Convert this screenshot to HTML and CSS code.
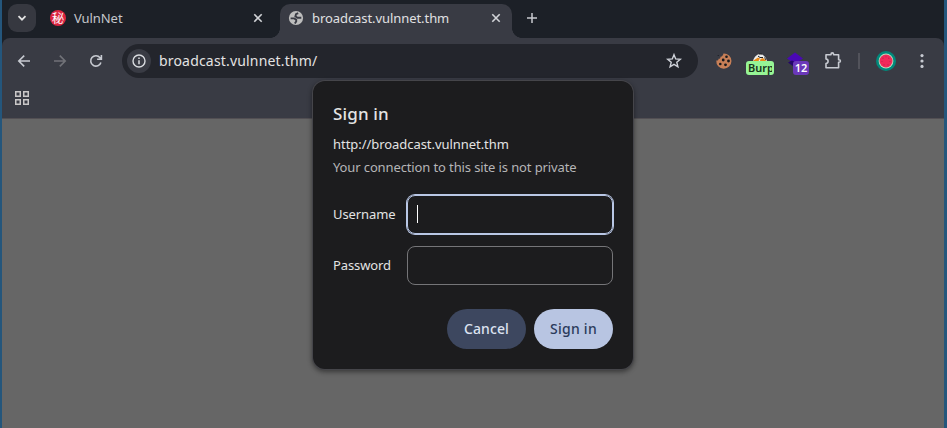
FILE: index.html
```
<!DOCTYPE html>
<html lang="en">
<head>
<meta charset="utf-8">
<title>broadcast.vulnnet.thm</title>
<link rel="stylesheet" href="styles.css">
</head>
<body>
<div class="window">
  <header class="tabs">
    <button class="tab-search" aria-label="Search tabs"><svg width="28" height="28" viewBox="0 0 28 28"><path d="M10.5 12.2l3.5 3.5 3.5-3.5" fill="none" stroke="#e3e3e3" stroke-width="1.8"/></svg></button>
    <div class="tab">
      <span class="seal">秘</span>
      <span class="tab-title">VulnNet</span>
      <svg class="close" width="16" height="16" viewBox="0 0 16 16"><path d="M4.3 4.3l7.4 7.4M11.7 4.3l-7.4 7.4"/></svg>
    </div>
    <div class="tab tab-active">
      <svg class="globe" width="16" height="16" viewBox="0 0 16 16"><circle cx="8" cy="8" r="7.1" fill="#bdbdbd"/><path d="M10.2 3.2L8 4.2 7.4 6.400l2.100 1.400h3.800M2.600 8.400h3.600l2 1.400v1.700l-1.400 2" fill="none" stroke="#393b44" stroke-width="1.9"/></svg>
      <span class="tab-title">broadcast.vulnnet.thm</span>
      <svg class="close" width="16" height="16" viewBox="0 0 16 16"><path d="M4.3 4.3l7.4 7.4M11.7 4.3l-7.4 7.4"/></svg>
    </div>
    <svg class="new-tab" width="16" height="16" viewBox="0 0 16 16"><path d="M8 3v10M3 8h10" stroke="#c7c9cf" stroke-width="1.5"/></svg>
  </header>
  <div class="chrome">
    <nav class="toolbar">
      <svg class="nav" width="16" height="16" viewBox="0 0 16 16"><path d="M14 8H3M8.2 2.6L2.8 8l5.4 5.4" stroke="#c7cad1"/></svg>
      <svg class="nav" width="16" height="16" viewBox="0 0 16 16"><path d="M2 8h11M7.8 2.6L13.2 8l-5.4 5.4" stroke="#717278"/></svg>
      <svg class="nav" width="16" height="16" viewBox="0 0 16 16"><path d="M12.9 9.4A5.2 5.2 0 1 1 12 4.7L13.3 6M13.4 2v4.3H9.1" stroke="#c7cad1"/></svg>
      <div class="address">
        <span class="info"><svg width="16" height="16" viewBox="0 0 16 16"><circle cx="8" cy="8" r="6" fill="none" stroke="#dadce0" stroke-width="1.4"/><path d="M8 7.2v4M8 4.6v1.5" stroke="#dadce0" stroke-width="1.5"/></svg></span>
        <span class="url">broadcast.vulnnet.thm/</span>
        <svg width="18" height="18" viewBox="0 0 18 18"><path d="M9 2.7l1.7 4.2 4.6.4-3.5 3 1.1 4.5L9 12.4l-3.9 2.4 1.1-4.5-3.5-3 4.6-.4z" fill="none" stroke="#d0d3da" stroke-width="1.4"/></svg>
      </div>
      <div class="extensions">
        <svg width="18" height="18" viewBox="0 0 18 18"><path d="M8.500 1.500A7.600 7.600 0 1 1 1.300 8.500c1.600.3 2.400-.4 2.200-1.700 1.500.2 2.200-.6 1.900-2C7 5 8 3.500 8.500 1.500z" fill="#c77f57"/><g fill="#17191d"><circle cx="11.500" cy="4.800" r="1.300"/><circle cx="8.200" cy="8" r="1.400"/><circle cx="13.500" cy="9" r="1.400"/><circle cx="10.500" cy="12.800" r="1.400"/><circle cx="5.300" cy="12" r="1.300"/><circle cx="3.200" cy="3.500" r=".6"/></g></svg>
        <div class="ext">
          <svg width="18" height="18" viewBox="0 0 18 18"><path d="M2 9c1-4 4-7 7-7s6 3 7 7z" fill="#ececec"/><path d="M2.500 8.500L7 5.500l2 1L7.500 9H2zM9.500 7l2.500-1 3.500 3H9z" fill="#e98a16"/><path d="M8 2h3M7 4l2 1.500h3M13.500 5.500L15 8" fill="none" stroke="#222"/></svg>
          <span class="badge badge-burp"><span>Burp</span></span>
        </div>
        <div class="ext">
          <svg width="18" height="18" viewBox="0 0 18 18"><path d="M8 .5l8 6-8 5.500-8-5.500z" fill="#4a08b5"/><path d="M1 10.500l4-2L10 11v6z" fill="#23056b"/></svg>
          <span class="badge badge-count">12</span>
        </div>
        <svg width="20" height="20" viewBox="0 0 20 20"><path d="M3 3.700h5V3.200a1.300 1.300 0 0 1 2.600 0v.5h5v5h.5a1.300 1.300 0 0 1 0 2.600h-.5v5.500H3v-4.200c2.800-.5 2.800-4.200 0-4.700z" fill="none" stroke="#c7cad1" stroke-width="1.600" stroke-linejoin="round"/></svg>
      </div>
      <span class="divider"></span>
      <svg class="avatar" width="20" height="20" viewBox="0 0 20 20"><circle cx="10" cy="10" r="10" fill="#00897b"/><circle cx="10" cy="10" r="7.400" fill="#b8e0c0"/><circle cx="10" cy="10" r="6.500" fill="#f02a5a"/><g fill="#b71f49"><circle cx="7" cy="7.200" r=".6"/><circle cx="12.800" cy="7.200" r=".6"/><circle cx="10" cy="5.800" r=".5"/><circle cx="6" cy="10.500" r=".5"/><circle cx="14" cy="10.500" r=".5"/><circle cx="8" cy="13.800" r=".6"/><circle cx="12" cy="13.800" r=".6"/></g></svg>
      <svg class="menu" width="4" height="16" viewBox="0 0 4 16"><g fill="#c7cad1"><circle cx="2" cy="2.600" r="1.600"/><circle cx="2" cy="8" r="1.600"/><circle cx="2" cy="13.400" r="1.600"/></g></svg>
    </nav>
    <div class="bookmarks">
      <svg width="14" height="14" viewBox="0 0 14 14"><g fill="none" stroke="#c9c7c7" stroke-width="1.500"><path d="M.75.75h4.500v4.500H.75zM8.750.75h4.500v4.500h-4.500zM.75 8.750h4.500v4.500H.75zM8.750 8.750h4.500v4.500h-4.500z"/></g></svg>
    </div>
  </div>
  <main class="page"></main>
</div>
<form class="dialog">
  <h1>Sign in</h1>
  <p class="origin">http://broadcast.vulnnet.thm</p>
  <p class="note">Your connection to this site is not private</p>
  <div class="row"><label>Username</label><div class="field field-focus"><span class="caret"></span></div></div>
  <div class="row"><label>Password</label><div class="field"></div></div>
  <div class="actions"><button type="button" class="btn">Cancel</button><button type="button" class="btn btn-primary">Sign in</button></div>
</form>
</body>
</html>
```
FILE: styles.css
```
* { box-sizing: border-box; }
body {
  margin: 0;
  height: 428px;
  overflow: hidden;
  background: #24567c;
  font: 13px/18px "Noto Sans", "Noto Sans CJK JP", sans-serif;
  color: #e3e3e3;
}
button { border: 0; padding: 0; font: inherit; }
svg { display: block; flex: none; }
.window {
  margin: 0 3px 0 2px;
  height: 428px;
  display: flex;
  flex-direction: column;
  background: #1c2027;
}
.tabs { height: 38px; display: flex; padding: 4px 0 0 6px; }
.tab-search { width: 28px; height: 28px; border-radius: 9px; background: #363840; }
.tab {
  width: 244px;
  height: 28px;
  display: flex;
  align-items: center;
  padding: 0 14px;
}
.tab-title { flex: 1; margin-left: 8px; color: #c4c6cb; letter-spacing: -.07px; }
.close { fill: none; stroke: #d2d4d8; stroke-width: 1.6; }
.seal {
  width: 16px;
  height: 16px;
  border-radius: 50%;
  background: #dc2440;
  color: #fff;
  font: 12px/15px "Noto Sans CJK JP", sans-serif;
  text-align: center;
}
.tab-active {
  position: relative;
  width: 232px;
  height: 34px;
  padding: 0 8px 6px;
  border-radius: 10px 10px 0 0;
  background: #393b44;
}
.tab-active .tab-title { color: #e0e0e2; }
.tab-active::before, .tab-active::after {
  content: "";
  position: absolute;
  bottom: 0;
  width: 10px;
  height: 10px;
}
.tab-active::before { left: -10px; background: radial-gradient(circle at 0 0, transparent 9.6px, #393b44 10.2px); }
.tab-active::after { right: -10px; background: radial-gradient(circle at 100% 0, transparent 9.6px, #393b44 10.2px); }
.new-tab { margin: 6px 0 0 12px; }
.chrome {
  height: 81px;
  background: #393b44;
  border-bottom: 1px solid #524f53;
  border-radius: 8px 8px 0 0;
}
.toolbar { height: 46px; display: flex; align-items: center; padding-left: 14px; }
.nav { margin-right: 20px; fill: none; stroke-width: 1.6; }
.address {
  width: 576px;
  height: 34px;
  margin-left: -2px;
  display: flex;
  align-items: center;
  padding: 0 15px 0 5px;
  border-radius: 17px;
  background: #23252c;
}
.info {
  width: 24px;
  height: 24px;
  display: grid;
  place-items: center;
  border-radius: 50%;
  background: #393b44;
}
.url { flex: 1; margin-left: 8px; font-size: 14px; letter-spacing: .18px; }
.extensions { display: flex; align-items: center; gap: 18px; margin-left: 17px; }
.ext { position: relative; }
.badge {
  position: absolute;
  height: 14px;
  border-radius: 3px;
  font-size: 11px;
  line-height: 14px;
  font-weight: 600;
}
.badge-burp {
  left: -5px;
  top: 9px;
  width: 28px;
  padding: 0 2px;
  background: #96f595;
  color: #16331a;
}
.badge-burp span { display: block; width: 24px; overflow: hidden; }
.badge-count {
  left: 6px;
  top: 9px;
  width: 16px;
  text-align: center;
  background: #6b38ba;
  color: #fff;
}
.divider { width: 2px; height: 16px; margin-left: 15px; background: #52535b; }
.avatar { margin-left: 16px; }
.menu { margin-left: 24px; }
.bookmarks { padding: 7px 13px; }
.page { flex: 1; background: #666; }
.dialog {
  position: absolute;
  left: 313px;
  top: 81px;
  width: 320px;
  height: 288px;
  padding: 21px 20px 20px;
  border-radius: 12px;
  background: #1c1c1e;
  box-shadow: 0 0 0 1px #45454a, 0 2px 5px 1px rgba(0, 0, 0, .45);
}
h1 { margin: 0 0 9px; font-size: 17px; line-height: 24px; font-weight: 500; letter-spacing: .15px; }
p { margin: 0; }
.origin { margin-bottom: 5px; letter-spacing: -.05px; }
.note { color: #b5b5b7; letter-spacing: -.12px; }
.row { display: flex; align-items: center; margin-top: 19px; }
.row + .row { margin-top: 12px; }
label { width: 74px; padding-bottom: 2px; letter-spacing: -.1px; }
.field { width: 206px; height: 39px; border: 1px solid #757578; border-radius: 8px; }
.field-focus {
  display: flex;
  align-items: center;
  padding-left: 9px;
  border-color: #b9c7e5;
  box-shadow: 0 0 0 1px #b9c7e5;
}
.caret { width: 1px; height: 18px; margin-bottom: 1px; background: #fff; }
.actions { display: flex; justify-content: flex-end; gap: 8px; margin-top: 24px; }
.btn {
  width: 79px;
  height: 40px;
  border-radius: 20px;
  background: #3d475f;
  color: #dce2f0;
  font-size: 14px;
  font-weight: 500;
  letter-spacing: .1px;
}
.btn-primary { background: #b8c5e2; color: #2b3b5b; letter-spacing: .25px; }
```
